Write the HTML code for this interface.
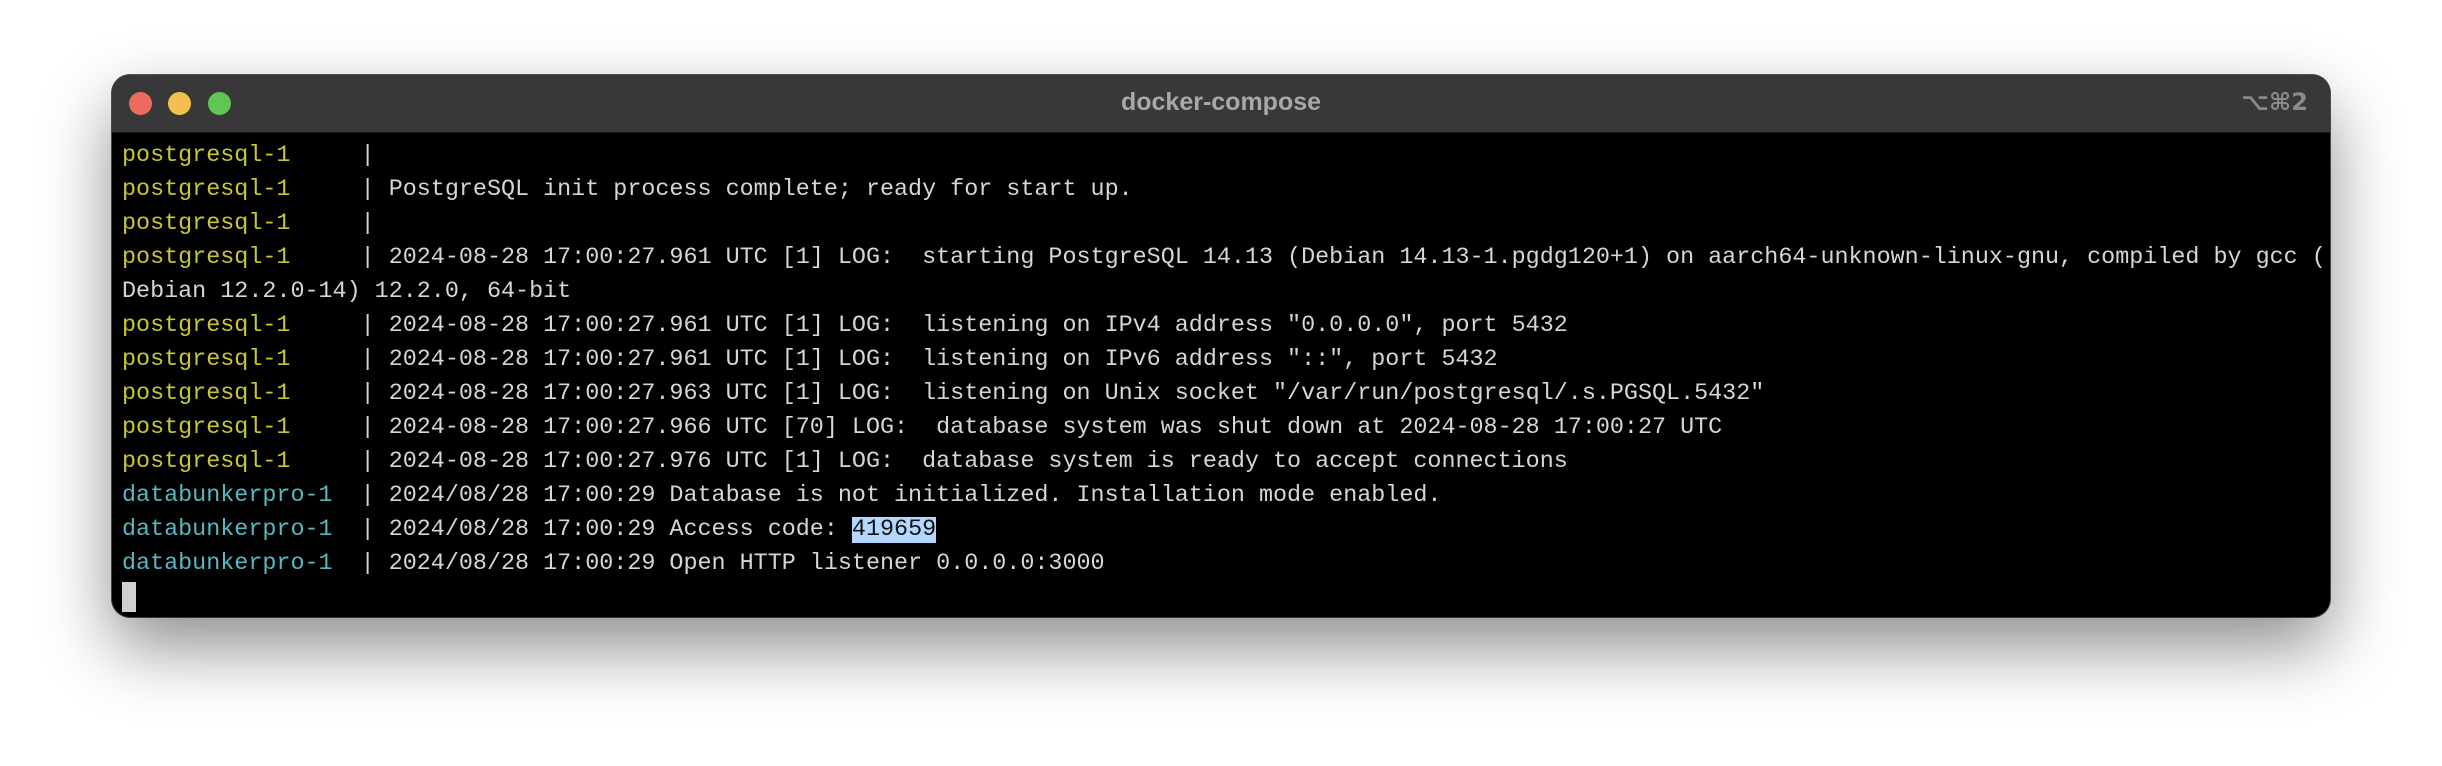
<!DOCTYPE html>
<html><head><style>
html,body{margin:0;width:2442px;height:766px;background:#fff;overflow:hidden}
.win{position:absolute;left:112px;top:75px;width:2218px;height:542px;border-radius:18px;background:#000;overflow:hidden;box-shadow:0 30px 70px rgba(0,0,0,.45),0 0 0 1px #555;}
.tb{position:absolute;left:0;top:0;right:0;height:57px;background:#383838;border-bottom:1px solid #1a1a1a}
.dot{position:absolute;top:17px;width:23px;height:23px;border-radius:50%}
.title{position:absolute;left:0;right:0;top:13px;text-align:center;font:bold 25px "Liberation Sans",sans-serif;color:#a8a8a8}
.kb{position:absolute;right:22px;top:13px;font:bold 24px "DejaVu Sans",sans-serif;color:#8a8a8a}
.term{position:absolute;left:10px;top:64px;font-family:"Liberation Mono",monospace;font-size:23.4px;color:#d6d6d6}
.l{height:34px;line-height:34px;white-space:pre}
.y{color:#c9c634}.c{color:#55b8c2}
.hl{background:#b3d7ff;color:#111}
.cur{position:absolute;left:10px;top:507px;width:14px;height:30px;background:#d0d0d0}
</style></head><body>
<div class="win">
<div class="tb">
<div class="dot" style="left:17px;background:#ed6a5e"></div>
<div class="dot" style="left:56px;background:#f5bf4f"></div>
<div class="dot" style="left:96px;background:#61c554"></div>
<div class="title">docker-compose</div>
<div class="kb">⌥⌘2</div>
</div>
<div class="term"><div class="l"><span class="y">postgresql-1     </span>|</div><div class="l"><span class="y">postgresql-1     </span>| PostgreSQL init process complete; ready for start up.</div><div class="l"><span class="y">postgresql-1     </span>|</div><div class="l"><span class="y">postgresql-1     </span>| 2024-08-28 17:00:27.961 UTC [1] LOG:  starting PostgreSQL 14.13 (Debian 14.13-1.pgdg120+1) on aarch64-unknown-linux-gnu, compiled by gcc (</div><div class="l">Debian 12.2.0-14) 12.2.0, 64-bit</div><div class="l"><span class="y">postgresql-1     </span>| 2024-08-28 17:00:27.961 UTC [1] LOG:  listening on IPv4 address "0.0.0.0", port 5432</div><div class="l"><span class="y">postgresql-1     </span>| 2024-08-28 17:00:27.961 UTC [1] LOG:  listening on IPv6 address "::", port 5432</div><div class="l"><span class="y">postgresql-1     </span>| 2024-08-28 17:00:27.963 UTC [1] LOG:  listening on Unix socket "/var/run/postgresql/.s.PGSQL.5432"</div><div class="l"><span class="y">postgresql-1     </span>| 2024-08-28 17:00:27.966 UTC [70] LOG:  database system was shut down at 2024-08-28 17:00:27 UTC</div><div class="l"><span class="y">postgresql-1     </span>| 2024-08-28 17:00:27.976 UTC [1] LOG:  database system is ready to accept connections</div><div class="l"><span class="c">databunkerpro-1  </span>| 2024/08/28 17:00:29 Database is not initialized. Installation mode enabled.</div><div class="l"><span class="c">databunkerpro-1  </span>| 2024/08/28 17:00:29 Access code: <span class="hl">419659</span></div><div class="l"><span class="c">databunkerpro-1  </span>| 2024/08/28 17:00:29 Open HTTP listener 0.0.0.0:3000</div></div>
<div class="cur"></div>
</div>
</body></html>
